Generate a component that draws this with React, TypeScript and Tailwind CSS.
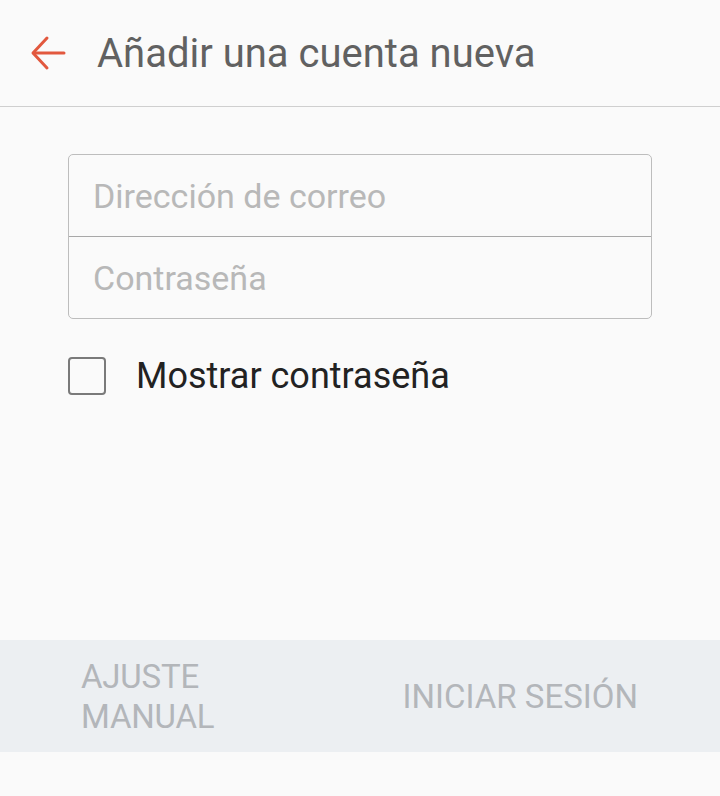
import React from "react";

export default function App() {
  const [show, setShow] = React.useState<boolean>(false);

  return (
    <div className="w-[720px] h-[796px] bg-[#fafafa] flex flex-col font-['Roboto',sans-serif]">
      <header className="h-[107px] flex items-center border-b border-[#cfcfcf] shrink-0">
        <button className="ml-[30px] w-[36px] h-[36px] flex items-center justify-center">
          <svg width="36" height="36" viewBox="0 0 36 36" fill="none" stroke="#e2583e" strokeWidth="3" strokeLinecap="round" strokeLinejoin="round">
            <path d="M34 18H4" />
            <path d="M17 3L3 18l14 15" />
          </svg>
        </button>
        <h1 className="ml-[31px] text-[40px] leading-none text-[#616161] pt-[2px]">Añadir una cuenta nueva</h1>
      </header>

      <main className="flex-1 flex flex-col px-[68px] pt-[47px]">
        <div className="w-[584px] border border-[#bdbdbd] rounded-[5px] flex flex-col">
          <input
            className="h-[82px] px-[24px] text-[34px] text-[#333] placeholder:text-[#b8b8b8] bg-transparent outline-none border-b border-[#a8a8a8]"
            placeholder="Dirección de correo"
          />
          <input
            type={show ? "text" : "password"}
            className="h-[81px] px-[24px] text-[34px] text-[#333] placeholder:text-[#b8b8b8] bg-transparent outline-none"
            placeholder="Contraseña"
          />
        </div>

        <label className="mt-[30px] flex items-center gap-[30px] cursor-pointer">
          <span className="w-[38px] h-[38px] border-2 border-[#7a7a7a] rounded-[4px] flex items-center justify-center">
            <input type="checkbox" className="hidden" checked={show} onChange={(e) => setShow(e.target.checked)} />
          </span>
          <span className="text-[36px] text-[#222]">Mostrar contraseña</span>
        </label>
      </main>

      <footer className="h-[112px] bg-[#eceff2] flex items-center shrink-0 mb-[44px]">
        <button className="ml-[81px] text-left text-[33px] leading-[40px] text-[#b3b6ba] tracking-[-0.2px] pt-[2px]">
          AJUSTE
          <br />
          MANUAL
        </button>
        <button className="ml-auto mr-[82px] text-[33px] text-[#b3b6ba] pt-[2px]">INICIAR SESIÓN</button>
      </footer>
    </div>
  );
}
